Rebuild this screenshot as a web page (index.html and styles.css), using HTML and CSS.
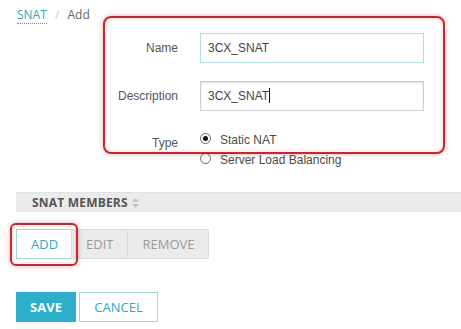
FILE: index.html
```html
<!DOCTYPE html>
<html lang="en">
<head>
  <meta charset="UTF-8">
  <title>SNAT - Add</title>
  <link rel="stylesheet" href="styles.css">
</head>
<body>
  <div class="page">
    <div class="crumbs">
      <a href="#">SNAT</a>
      <span class="sep">/</span>
      <span>Add</span>
    </div>

    <div class="form">
      <label class="label">Name</label>
      <div class="field focus">3CX_SNAT</div>

      <label class="label">Description</label>
      <div class="field">3CX_SNAT<span class="caret"></span></div>

      <label class="label type-label">Type</label>
      <div class="radios">
        <div class="radio-row"><span class="radio checked"></span>Static NAT</div>
        <div class="radio-row"><span class="radio"></span>Server Load Balancing</div>
      </div>
    </div>

    <div class="members">
      <div class="members-head">
        SNAT MEMBERS
        <svg class="sort" width="7" height="10" viewBox="0 0 7 10">
          <path d="M3.5 0 L7 4 L0 4 Z" fill="#c4c4c4"/>
          <path d="M0 6 L7 6 L3.5 10 Z" fill="#c4c4c4"/>
        </svg>
      </div>
      <div class="tools">
        <button class="tool active">ADD</button>
        <button class="tool">EDIT</button>
        <button class="tool">REMOVE</button>
      </div>
    </div>

    <div class="actions">
      <button class="save">SAVE</button>
      <button class="cancel">CANCEL</button>
    </div>

    <!-- annotation boxes drawn over the screenshot -->
    <div class="mark mark-form"></div>
    <div class="mark mark-add"></div>
  </div>
</body>
</html>
```

FILE: styles.css
```css
body {
  margin: 0;
  background: #fff;
  font-family: "Liberation Sans", Arial, sans-serif;
  color: #555;
}

.page {
  position: relative;
  width: 461px;
  height: 329px;
  overflow: hidden;
}

/* breadcrumb */
.crumbs {
  padding: 7px 0 0 17px;
  font-family: "Open Sans", sans-serif;
  font-size: 12px;
  line-height: 16px;
  color: #666;
}

.crumbs a {
  color: #2fa8c0;
  text-decoration: none;
  border-bottom: 1px dotted #2fa8c0;
}

.crumbs .sep {
  color: #ccc;
  margin: 0 5px;
}

/* form */
.form {
  margin-top: 10px;
  display: grid;
  grid-template-columns: 178px 224px;
  grid-template-rows: 30px 30px auto;
  column-gap: 22px;
  row-gap: 18px;
  font-size: 12px;
}

.label {
  text-align: right;
  align-self: center;
  color: #555;
}

.field {
  box-sizing: border-box;
  height: 30px;
  border: 1px solid #cfcfcf;
  box-shadow: inset 0 1px 2px rgba(0, 0, 0, 0.15);
  padding: 0 7px;
  line-height: 28px;
  font-size: 12px;
  color: #444;
}

.field.focus {
  border-color: #b3dde4;
  box-shadow: none;
}

.caret {
  display: inline-block;
  width: 1px;
  height: 15px;
  background: #111;
  vertical-align: -3px;
}

.type-label {
  align-self: start;
  margin-top: 7px;
}

.radios {
  margin-top: 1px;
}

.radio-row {
  display: flex;
  align-items: center;
  height: 20px;
  color: #4a4a4a;
}

.radio {
  box-sizing: border-box;
  width: 11px;
  height: 11px;
  margin: -4px 9px 0 0;
  border: 1px solid #666;
  border-radius: 50%;
  background: #fff;
  display: flex;
  align-items: center;
  justify-content: center;
}

.radio.checked::after {
  content: "";
  width: 5px;
  height: 5px;
  border-radius: 50%;
  background: #111;
}

/* members table */
.members {
  margin: 22px 0 0 16px;
}

.members-head {
  height: 20px;
  background: #ebebeb;
  border-top: 1px solid #e2e2e2;
  box-sizing: border-box;
  padding-left: 16px;
  font-family: "Open Sans", sans-serif;
  font-weight: 700;
  font-size: 12px;
  letter-spacing: 0.2px;
  line-height: 19px;
  color: #555;
  display: flex;
  align-items: center;
  gap: 4px;
}

.tools {
  display: flex;
  margin-top: 17px;
}

.tool {
  height: 30px;
  padding: 0 14px;
  border: 1px solid #dcdcdc;
  margin-left: -1px;
  background: #ebebeb;
  font-family: "Open Sans", sans-serif;
  font-size: 13px;
  color: #9a9a9a;
}

.tool:first-child {
  margin-left: 0;
}

.tool.active {
  width: 56px;
  background: #fff;
  border-color: #a7d5dc;
  color: #2fa8c0;
}

/* form actions */
.actions {
  display: flex;
  gap: 3px;
  margin: 33px 0 0 16px;
}

.actions button {
  height: 30px;
  font-family: "Open Sans", sans-serif;
  font-size: 13px;
}

.save {
  width: 60px;
  border: none;
  background: #2bafca;
  color: #fff;
  font-weight: 700;
}

.cancel {
  width: 79px;
  border: 1px solid #a7d5dc;
  background: #fff;
  color: #2fa8c0;
}

/* red highlight marks */
.mark {
  position: absolute;
  border: 2px solid #bd2a30;
  border-radius: 8px;
  box-shadow: 0 0 5px rgba(210, 60, 60, 0.45), inset 0 0 4px rgba(210, 60, 60, 0.25);
}

.mark-form {
  left: 103px;
  top: 16px;
  width: 338px;
  height: 134px;
}

.mark-add {
  left: 10px;
  top: 223px;
  width: 64px;
  height: 39px;
  border-radius: 6px;
}
```
